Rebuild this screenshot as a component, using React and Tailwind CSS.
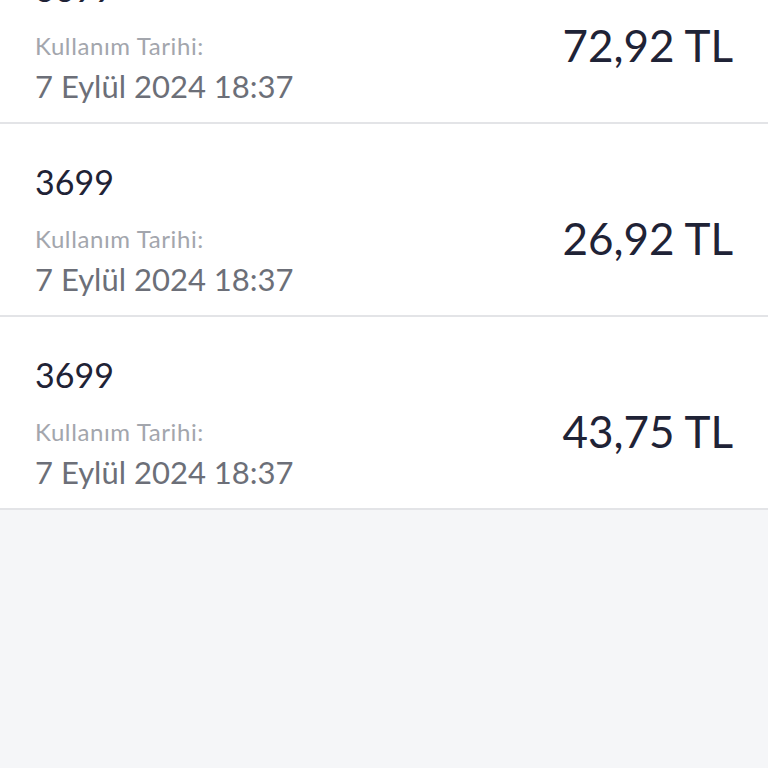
const rows = [
  { code: '3699', date: '7 Eylül 2024 18:37', amount: '72,92 TL' },
  { code: '3699', date: '7 Eylül 2024 18:37', amount: '26,92 TL' },
  { code: '3699', date: '7 Eylül 2024 18:37', amount: '43,75 TL' },
];

export default function App() {
  return (
    <div className="min-h-[768px] h-[768px] overflow-hidden bg-[#f5f6f8] font-['Lato',sans-serif]">
      <div className="-mt-[69px] bg-white">
        {rows.map((r, i) => (
          <div
            key={i}
            className="h-[193px] flex items-start justify-between px-[35px] border-b-2 border-[#e3e4e7]"
          >
            <div className="flex flex-col pt-[38px]">
              <p className="text-[34px] leading-[40px] text-[#1f2336]">{r.code}</p>
              <p className="mt-[22px] text-[24px] leading-[30px] tracking-[0.6px] text-[#a3a6ad]">Kullanım Tarihi:</p>
              <p className="mt-[5px] text-[31px] leading-[40px] text-[#6c6f78]">{r.date}</p>
            </div>
            <p className="pt-[89px] text-[44px] leading-[50px] text-[#1f2336]">{r.amount}</p>
          </div>
        ))}
      </div>
    </div>
  );
}
